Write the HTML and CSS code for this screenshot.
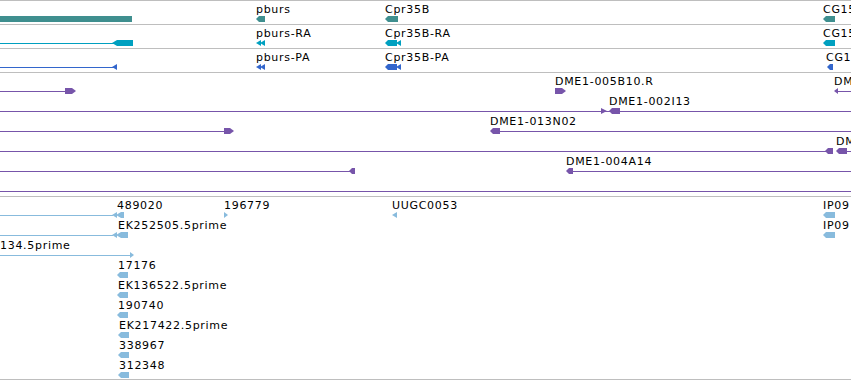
FILE: index.html
```html
<!DOCTYPE html>
<html lang="en">
<head>
    <meta charset="UTF-8">
    <title>Detail view</title>
    <link rel="stylesheet" href="styles.css">
</head>
<body>

<div class="panel">
    <!-- genes -->
    <div class="track">
        <svg class="canvas teal" width="851" height="23">
            <rect x="0" y="15" width="132" height="6"/>
            <text class="lbl" x="256" y="12">pburs</text>
            <polygon points="256,18 259,15 265,15 265,21 259,21"/>
            <text class="lbl" x="385" y="12">Cpr35B</text>
            <polygon points="385,18 388,15 398,15 398,21 388,21"/>
            <text class="lbl" x="823" y="12">CG15</text>
            <polygon points="823,18 826,15 835,15 835,21 826,21"/>
        </svg>
    </div>
    <!-- transcripts -->
    <div class="track">
        <svg class="canvas cyan" width="851" height="23">
            <rect x="0" y="18" width="114" height="1"/>
            <polygon points="112,18 117,15 133,15 133,21 117,21"/>
            <text class="lbl" x="256" y="12">pburs-RA</text>
            <polygon points="256,18 261,15 261,21"/>
            <polygon points="260,18 265,15 265,21"/>
            <text class="lbl" x="385" y="12">Cpr35B-RA</text>
            <polygon points="385,18 388,15 397,15 397,21 388,21"/>
            <polygon points="396,18 401,15 401,21"/>
            <text class="lbl" x="823" y="12">CG15</text>
            <polygon points="823,18 826,15 835,15 835,21 826,21"/>
        </svg>
    </div>
    <!-- proteins -->
    <div class="track">
        <svg class="canvas blue" width="851" height="23">
            <rect x="0" y="18" width="114" height="1"/>
            <polygon points="112,18 117,15 117,21"/>
            <text class="lbl" x="256" y="12">pburs-PA</text>
            <polygon points="256,18 261,15 261,21"/>
            <polygon points="260,18 265,15 265,21"/>
            <text class="lbl" x="385" y="12">Cpr35B-PA</text>
            <polygon points="385,18 388,15 397,15 397,21 388,21"/>
            <polygon points="396,18 401,15 401,21"/>
            <text class="lbl" x="826" y="12">CG15</text>
            <polygon points="827,18 830,15 833,15 833,21 830,21"/>
        </svg>
    </div>
    <!-- BAC ends -->
    <div class="track">
        <svg class="canvas purple" width="851" height="123">
            <rect x="0" y="18" width="66" height="1"/>
            <polygon points="65,15 72,15 76,18 72,21 65,21"/>
            <text class="lbl" x="555" y="12">DME1-005B10.R</text>
            <polygon points="555,15 562,15 566,18 562,21 555,21"/>
            <text class="lbl" x="834" y="12">DME1</text>
            <polygon points="834,18 838,15 838,21"/>
            <rect x="838" y="18" width="13" height="1"/>

            <rect x="0" y="38" width="851" height="1"/>
            <polygon points="601,35 607,38 601,41"/>
            <text class="lbl" x="609" y="32">DME1-002I13</text>
            <polygon points="609,38 612,35 620,35 620,41 612,41"/>

            <rect x="0" y="58" width="225" height="1"/>
            <polygon points="224,55 230,55 234,58 230,61 224,61"/>
            <text class="lbl" x="490" y="52">DME1-013N02</text>
            <polygon points="490,58 493,55 500,55 500,61 493,61"/>
            <rect x="500" y="58" width="351" height="1"/>

            <rect x="0" y="78" width="826" height="1"/>
            <polygon points="825,78 828,75 833,75 833,81 828,81"/>
            <text class="lbl" x="836" y="72">DME1</text>
            <polygon points="836,78 839,75 847,75 847,81 839,81"/>
            <rect x="847" y="78" width="4" height="1"/>

            <rect x="0" y="98" width="350" height="1"/>
            <polygon points="349,98 352,95 355,95 355,101 352,101"/>
            <text class="lbl" x="566" y="92">DME1-004A14</text>
            <polygon points="566,98 569,95 573,95 573,101 569,101"/>
            <rect x="573" y="98" width="278" height="1"/>

            <rect x="0" y="118" width="851" height="1"/>
        </svg>
    </div>
    <!-- ESTs -->
    <div class="track last">
        <svg class="canvas sky" width="851" height="182">
            <rect x="0" y="18" width="113" height="1"/>
            <polygon points="112,18 117,15 117,21"/>
            <polygon points="116,18 121,15 124,15 124,21 121,21"/>
            <text class="lbl" x="117" y="12">489020</text>
            <text class="lbl" x="224" y="12">196779</text>
            <polygon points="224,15 228,18 224,21"/>
            <text class="lbl" x="392" y="12">UUGC0053</text>
            <polygon points="392,18 397,15 397,21"/>
            <text class="lbl" x="823" y="12">IP09</text>
            <polygon points="823,18 826,15 835,15 835,21 826,21"/>

            <rect x="0" y="38" width="113" height="1"/>
            <polygon points="112,38 117,35 117,41"/>
            <polygon points="116,38 121,35 128,35 128,41 121,41"/>
            <text class="lbl" x="118" y="32">EK252505.5prime</text>
            <text class="lbl" x="823" y="32">IP09</text>
            <polygon points="823,38 826,35 835,35 835,41 826,41"/>

            <text class="lbl" x="0" y="52">134.5prime</text>
            <rect x="0" y="58" width="131" height="1"/>
            <polygon points="130,55 134,58 130,61"/>

            <text class="lbl" x="118" y="72">17176</text>
            <polygon points="117,78 120,75 128,75 128,81 120,81"/>
            <text class="lbl" x="118" y="92">EK136522.5prime</text>
            <polygon points="117,98 120,95 128,95 128,101 120,101"/>
            <text class="lbl" x="118" y="112">190740</text>
            <polygon points="117,118 120,115 128,115 128,121 120,121"/>
            <text class="lbl" x="119" y="132">EK217422.5prime</text>
            <polygon points="118,138 121,135 129,135 129,141 121,141"/>
            <text class="lbl" x="119" y="152">338967</text>
            <polygon points="118,158 121,155 129,155 129,161 121,161"/>
            <text class="lbl" x="119" y="172">312348</text>
            <polygon points="118,178 121,175 129,175 129,181 121,181"/>
        </svg>
    </div>
</div>

</body>
</html>
```

FILE: styles.css
```css
body, html {
    margin: 0;
    padding: 0;
    background: #fff;
    overflow: hidden;
}

.panel {
    width: 851px;
}

.track {
    border-top: 1px solid #bebebe;
}
.track.last {
    border-bottom: 1px solid #bebebe;
}

.canvas {
    display: block;
    overflow: hidden;
}

.lbl {
    font-family: "DejaVu Sans", sans-serif;
    font-size: 11px;
    letter-spacing: 0.7px;
    fill: #000;
}

.teal polygon, .teal rect { fill: #3f8f8f; }
.cyan polygon, .cyan rect { fill: #00a0c0; }
.blue polygon, .blue rect { fill: #3366cc; }
.purple polygon, .purple rect { fill: #7755aa; }
.sky polygon, .sky rect { fill: #88bbdd; }
```
